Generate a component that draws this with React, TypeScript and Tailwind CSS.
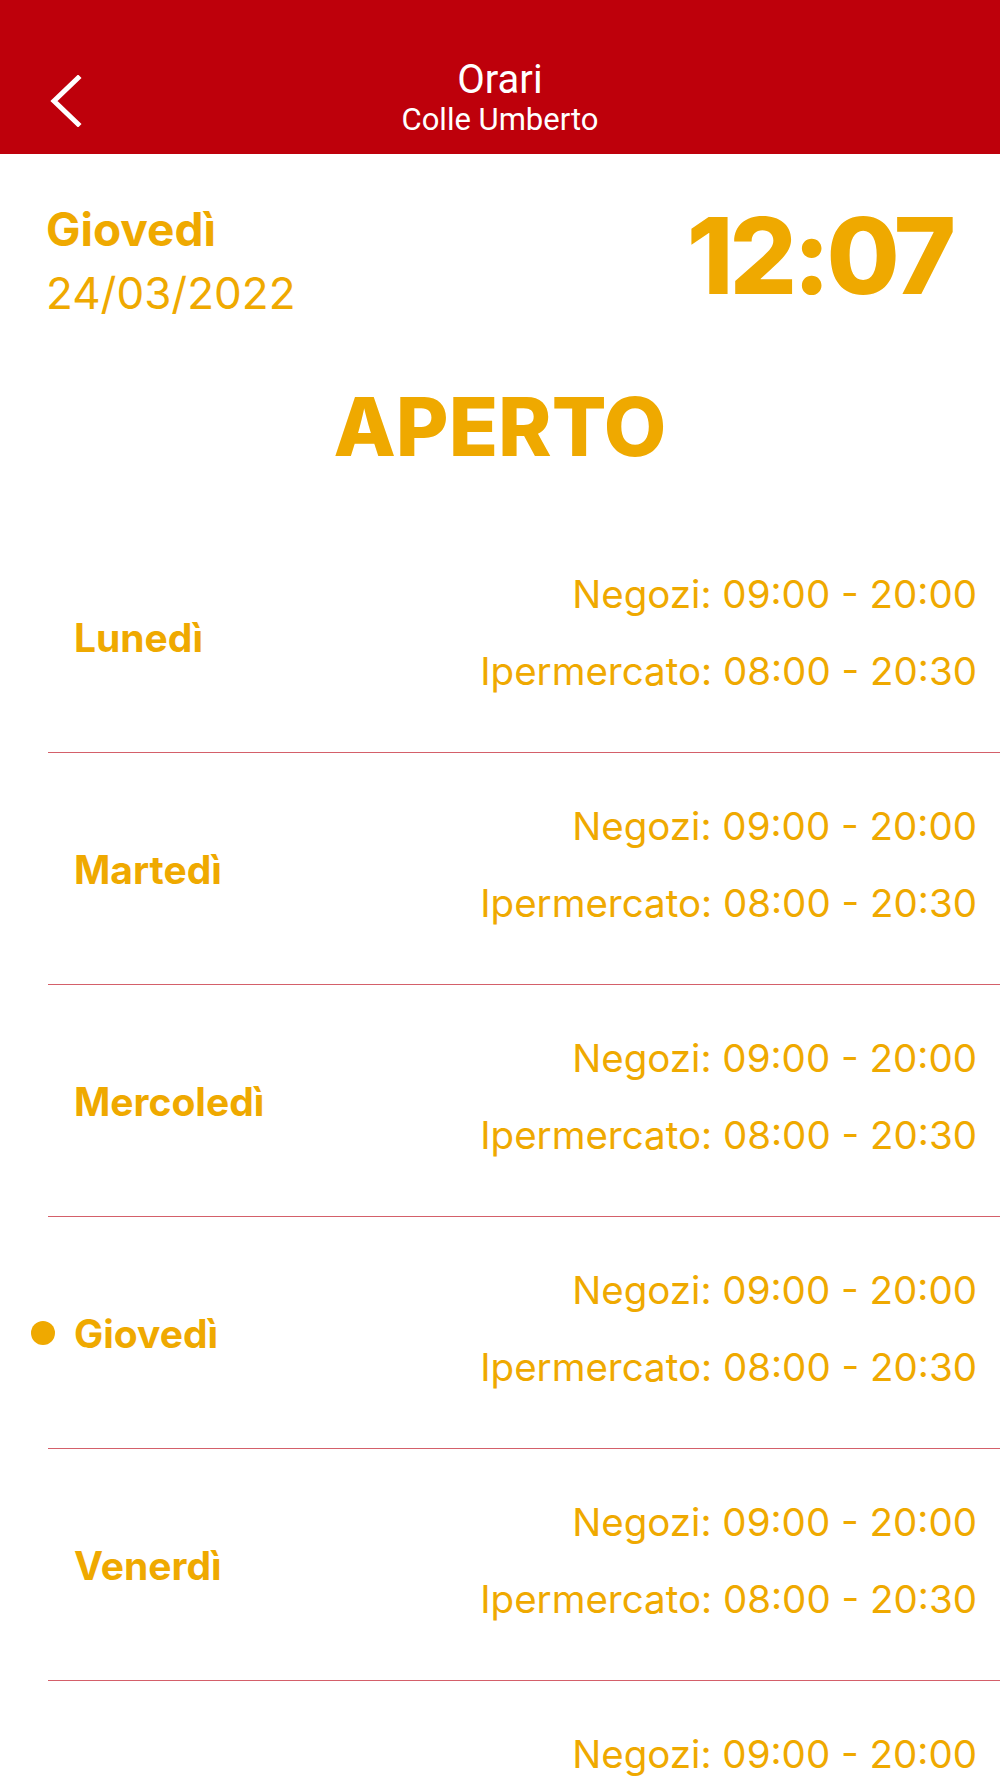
import React from "react";

const days = [
  { name: "Lunedì", today: false },
  { name: "Martedì", today: false },
  { name: "Mercoledì", today: false },
  { name: "Giovedì", today: true },
  { name: "Venerdì", today: false },
  { name: "Sabato", today: false },
  { name: "Domenica", today: false },
];

function DayRow({ name, today }: { name: string; today: boolean }) {
  return (
    <div className="flex items-center justify-between border-b border-[#d4606a] pl-[26px] pr-[23px] pt-[35px] pb-[42px]">
      <div className="relative pt-[8px] text-[39px] font-bold leading-none">
        {today && (
          <span className="absolute left-[-43px] top-1/2 mt-[4px] h-[24px] w-[24px] -translate-y-1/2 rounded-full bg-[#efa900]" />
        )}
        {name}
      </div>
      <div className="text-right text-[38.5px] leading-[77px]">
        <div>Negozi: 09:00 - 20:00</div>
        <div>Ipermercato: 08:00 - 20:30</div>
      </div>
    </div>
  );
}

export default function App() {
  return (
    <div className="h-[1778px] overflow-hidden bg-white">
      <header className="grid h-[154px] grid-cols-[1fr_auto_1fr] items-center bg-[#be000b] text-white">
        <button className="flex items-center pl-[49px] pt-[48px]">
          <svg width="34" height="52" viewBox="0 0 34 52" fill="none">
            <path
              d="M29 3 L5 26 L29 49"
              stroke="white"
              strokeWidth="5"
              strokeLinecap="square"
            />
          </svg>
        </button>
        <div
          className="pt-[42px] text-center"
          style={{ fontFamily: "Roboto, 'Liberation Sans', sans-serif" }}
        >
          <div className="text-[40px] leading-[44px]">Orari</div>
          <div className="text-[31px] leading-[36px]">Colle Umberto</div>
        </div>
        <div />
      </header>

      <main
        className="text-[#efa900]"
        style={{ fontFamily: "Inter, 'Open Sans', sans-serif" }}
      >
        <section className="flex items-start justify-between pl-[46px] pr-[48px] pt-[48px]">
          <div>
            <div className="text-[46px] font-bold leading-[54px]">Giovedì</div>
            <div className="mt-[10px] text-[44px] leading-[54px]">24/03/2022</div>
          </div>
          <div className="mt-[-6px] text-[106px] font-extrabold leading-[120px] tracking-[-4px]">
            12:07
          </div>
        </section>

        <div className="mt-[57px] text-center text-[81px] font-extrabold leading-[100px]">
          APERTO
        </div>

        <div className="ml-[48px] mt-[44px]">
          {days.map((d) => (
            <DayRow key={d.name} name={d.name} today={d.today} />
          ))}
        </div>
      </main>
    </div>
  );
}
